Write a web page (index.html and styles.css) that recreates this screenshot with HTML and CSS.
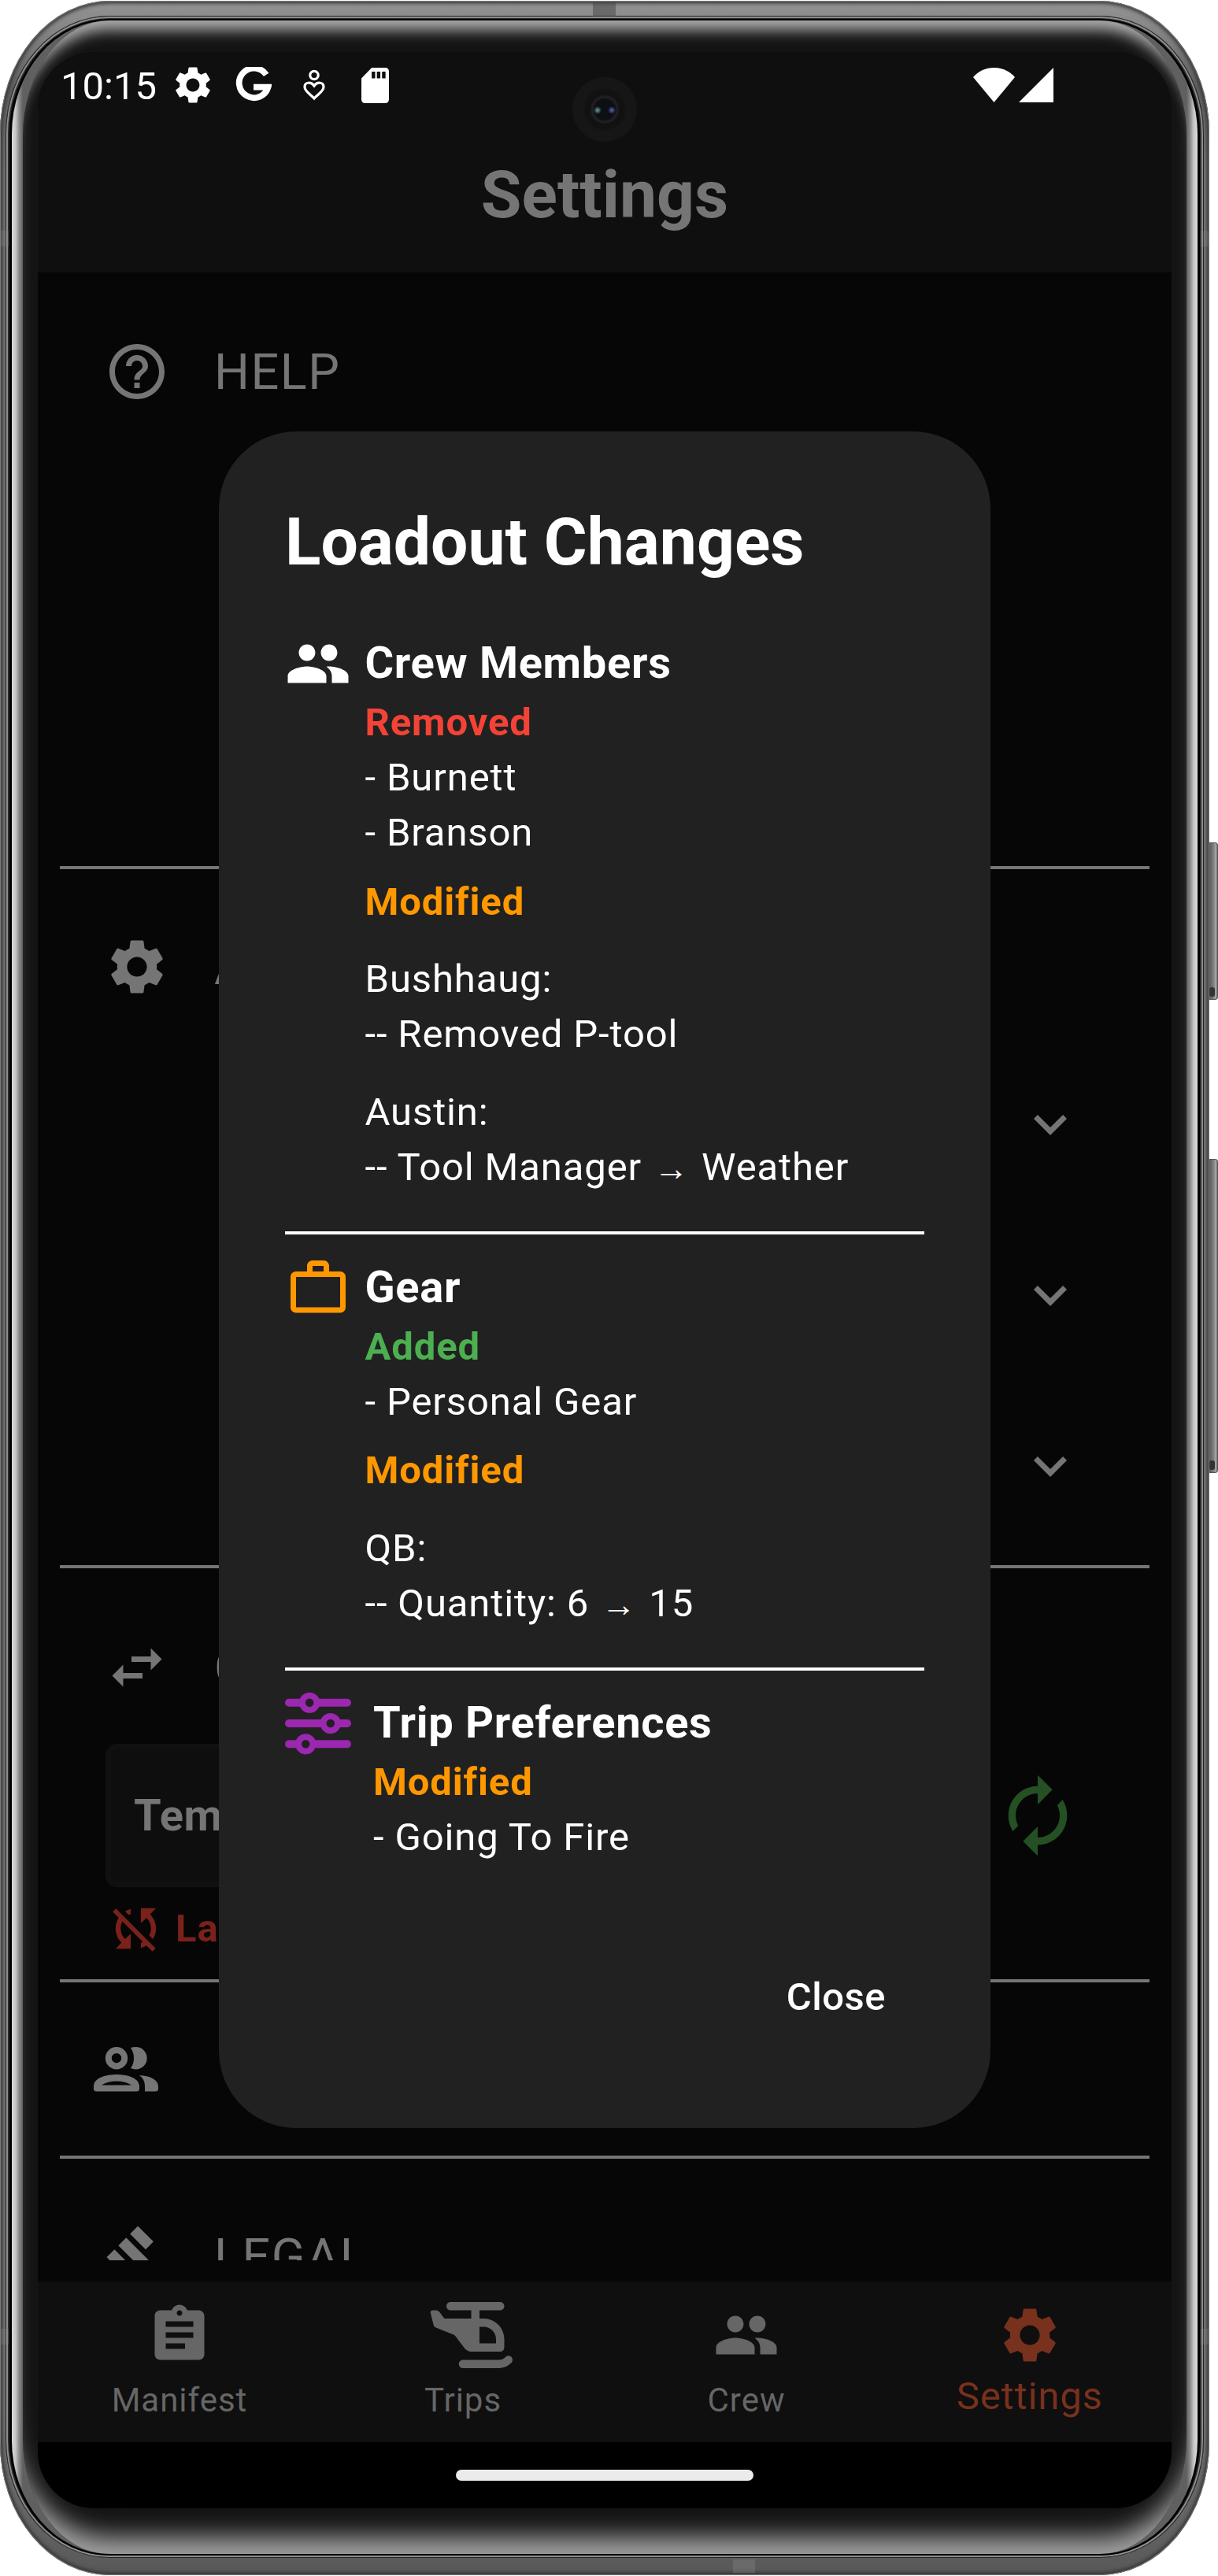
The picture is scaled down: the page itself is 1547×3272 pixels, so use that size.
FILE: index.html
```html
<!DOCTYPE html>
<html lang="en">
<head>
<meta charset="utf-8">
<title>Settings</title>
<link rel="stylesheet" href="styles.css">
</head>
<body>
<svg width="0" height="0" class="defs">
  <symbol id="gear" viewBox="0 0 24 24"><path fill-rule="evenodd" d="M19.14 12.94c.04-.3.06-.61.06-.94 0-.32-.02-.64-.07-.94l2.03-1.58c.18-.14.23-.41.12-.61l-1.92-3.32c-.12-.22-.37-.29-.59-.22l-2.39.96c-.5-.38-1.03-.7-1.62-.94l-.36-2.54c-.04-.24-.24-.41-.48-.41h-3.84c-.24 0-.43.17-.47.41l-.36 2.54c-.59.24-1.13.57-1.62.94l-2.39-.96c-.22-.08-.47 0-.59.22L2.74 8.87c-.12.21-.08.47.12.61l2.03 1.58c-.05.3-.09.63-.09.94s.02.64.07.94l-2.03 1.58c-.18.14-.23.41-.12.61l1.92 3.32c.12.22.37.29.59.22l2.39-.96c.5.38 1.03.7 1.62.94l.36 2.54c.05.24.24.41.48.41h3.84c.24 0 .44-.17.47-.41l.36-2.54c.59-.24 1.13-.56 1.62-.94l2.39.96c.22.08.47 0 .59-.22l1.92-3.32c.12-.22.07-.47-.12-.61l-2.01-1.58zM12 15.6c-1.98 0-3.6-1.62-3.6-3.6s1.62-3.6 3.6-3.6 3.6 1.62 3.6 3.6-1.62 3.6-3.6 3.6z"/></symbol>
  <symbol id="people" viewBox="0 0 24 24"><path d="M16 11c1.66 0 2.99-1.34 2.99-3S17.66 5 16 5c-1.66 0-3 1.34-3 3s1.34 3 3 3zm-8 0c1.66 0 2.99-1.34 2.99-3S9.66 5 8 5C6.34 5 5 6.34 5 8s1.34 3 3 3zm0 2c-2.33 0-7 1.17-7 3.5V19h14v-2.5c0-2.33-4.67-3.5-7-3.5zm8 0c-.29 0-.62.02-.97.05 1.16.84 1.97 1.97 1.97 3.45V19h6v-2.5c0-2.33-4.67-3.5-7-3.5z"/></symbol>
  <symbol id="chevron" viewBox="0 0 24 24"><path d="M16.59 8.59L12 13.17 7.41 8.59 6 10l6 6 6-6z"/></symbol>
</svg>

<div class="device">
  <span class="key power"></span>
  <span class="key volume"></span>
  <div class="body">
    <span class="band top"></span><span class="band bottom"></span>
    <span class="band side left upper"></span><span class="band side left lower"></span>
    <span class="band side right upper"></span><span class="band side right lower"></span>
    <div class="groove"><div class="seam"><div class="glass"><div class="bezel">
      <main class="screen">
        <header class="appbar">
          <div class="status">
            <span class="clock">10:15</span>
            <svg class="s-gear"><use href="#gear"/></svg>
            <svg class="s-google" viewBox="0 0 44 44"><path d="M37.5 9.5A18 18 0 1 0 39.8 24.5H22" fill="none" stroke="#fff" stroke-width="7.4"/></svg>
            <svg class="s-heart" viewBox="0 0 28 40" fill="none" stroke="#fff" stroke-width="3.2"><circle cx="14" cy="7.500" r="5.2"/><path d="M14 37C9 31.500 2 28 2 22.500C2 16 10 15.500 14 21C18 15.500 26 16 26 22.500C26 28 19 31.500 14 37z"/></svg>
            <svg class="s-sd" viewBox="4 2 16 20" preserveAspectRatio="none"><path d="M18 2h-8L4.020 8 4 20c0 1.100.9 2 2 2h12c1.100 0 2-.9 2-2V4c0-1.100-.9-2-2-2zm-6 6h-2V4.200h2V8zm3 0h-2V4.200h2V8zm3 0h-2V4.200h2V8z"/></svg>
            <svg class="s-wifi" viewBox="0 0 53 44"><path d="M26.500 44L0 12C7 4 16 0 26.500 0S46 4 53 12z"/></svg>
            <svg class="s-cell" viewBox="0 0 44 44"><path d="M44 0V44H0z"/></svg>
          </div>
          <h1>Settings</h1>
          <span class="camera"></span>
        </header>

        <div class="list">
          <section class="help">
            <div class="row"><svg class="icon" viewBox="0 0 24 24"><path d="M11 18h2v-2h-2v2zm1-16C6.480 2 2 6.480 2 12s4.480 10 10 10 10-4.480 10-10S17.520 2 12 2zm0 18c-4.410 0-8-3.590-8-8s3.590-8 8-8 8 3.590 8 8-3.590 8-8 8zm0-14c-2.210 0-4 1.790-4 4h2c0-1.100.9-2 2-2s2 .9 2 2c0 2-3 1.750-3 5h2c0-2.250 3-2.500 3-5 0-2.210-1.790-4-4-4z"/></svg><span>HELP</span></div>
          </section>
          <section class="app">
            <div class="row"><svg class="icon"><use href="#gear"/></svg><span>APP</span></div>
            <div class="options">
              <div class="option"><svg class="icon"><use href="#chevron"/></svg></div>
              <div class="option"><svg class="icon"><use href="#chevron"/></svg></div>
              <div class="option"><svg class="icon"><use href="#chevron"/></svg></div>
            </div>
          </section>
          <section class="share">
            <div class="row"><svg class="icon" viewBox="0 0 24 24"><path d="M6.990 11L3 15l3.990 4v-3H14v-2H6.990v-3zM21 9l-3.990-4v3H10v2h7.010v3L21 9z"/></svg><span>C</span></div>
            <div class="template">
              <div class="field">Tem</div>
              <svg class="renew" viewBox="0 0 24 24"><path d="M12 6v3l4-4-4-4v3c-4.420 0-8 3.580-8 8 0 1.570.46 3.030 1.240 4.260L6.700 14.800c-.45-.83-.7-1.790-.7-2.800 0-3.310 2.690-6 6-6zm6.760 1.740L17.300 9.200c.44.84.7 1.790.7 2.800 0 3.310-2.690 6-6 6v-3l-4 4 4 4v-3c4.420 0 8-3.580 8-8 0-1.570-.46-3.030-1.240-4.260z"/></svg>
            </div>
            <div class="sync"><svg viewBox="0 0 24 24"><path d="M10 6.350V4.260c-.8.210-1.550.54-2.230.96l1.460 1.460c.25-.12.5-.24.77-.33zm-7.140-.94l2.360 2.360C4.450 8.990 4 10.440 4 12c0 2.210.91 4.200 2.360 5.640L4 20h6v-6l-2.240 2.240C6.680 15.150 6 13.660 6 12c0-1 .25-1.940.68-2.770l8.080 8.080c-.25.13-.5.25-.77.34v2.090c.8-.21 1.550-.54 2.230-.96l2.360 2.360 1.270-1.270L4.140 4.140 2.860 5.410zM20 4h-6v6l2.240-2.240C17.320 8.850 18 10.340 18 12c0 1-.25 1.940-.68 2.770l1.460 1.460C19.550 15.010 20 13.560 20 12c0-2.210-.91-4.200-2.360-5.640L20 4z"/></svg>La</div>
          </section>
          <section class="crew">
            <svg class="group" viewBox="0 0 82 57"><circle cx="29" cy="14.200" r="10.200" fill="none" stroke="#757575" stroke-width="8"/><path d="M47 1Q50 0 53.500 0A14.200 14.200 0 0 1 53.500 28.400Q50 28.400 47 27Q51 21.500 51 14.200Q51 7 47 1z"/><path fill-rule="evenodd" d="M0 50C0 39 16 35 29 35S58 39 58 50v3q0 3.500-3.500 3.500h-51Q0 56.500 0 53zM10 48.500h38Q40 43.500 29 43.500T10 48.500z"/><path d="M58 36C72 36.500 82 42 82 50v3q0 3.500-3.500 3.500H65V50Q65 41 58 36z"/></svg>
          </section>
          <section class="legal">
            <div class="row"><svg class="icon" viewBox="0 0 24 24"><path d="M1 21h12v2H1zM5.245 8.070l2.830-2.827 14.140 14.142-2.828 2.828zM12.317 1l5.657 5.656-2.830 2.830-5.654-5.660zM3.825 9.485l5.657 5.657-2.828 2.828-5.657-5.657z"/></svg><span>LEGAL</span></div>
          </section>
        </div>

        <nav class="tabs">
          <div class="tab"><svg class="icon" viewBox="0 0 24 24"><path d="M19 3h-4.180C14.400 1.840 13.300 1 12 1c-1.300 0-2.400.84-2.820 2H5c-1.100 0-2 .9-2 2v14c0 1.100.9 2 2 2h14c1.100 0 2-.9 2-2V5c0-1.100-.9-2-2-2zm-7 0c.55 0 1 .45 1 1s-.45 1-1 1-1-.45-1-1 .45-1 1-1zm2 14H7v-2h7v2zm3-4H7v-2h10v2zm0-4H7V7h10v2z"/></svg><span>Manifest</span></div>
          <div class="tab trips"><svg class="heli" viewBox="0 0 640 512"><path fill-rule="evenodd" d="M128 32c0-17.700 14.300-32 32-32H544c17.700 0 32 14.300 32 32s-14.300 32-32 32H384v64h32c88.400 0 160 71.600 160 160v64c0 17.700-14.300 32-32 32H384 320c-20.100 0-39.100-9.500-51.200-25.600l-71.400-95.200c-3.500-4.700-8.300-8.300-13.700-10.500L47.200 198.100c-9.500-3.800-16.700-12-19.200-22L5 83.900C2.400 73.800 10.100 64 20.500 64H48c10.100 0 19.600 4.700 25.600 12.800L112 128H320V64H160c-17.700 0-32-14.300-32-32zM384 320H512V288c0-53-43-96-96-96H384V320zM630.600 425.400c12.500 12.500 12.500 32.800 0 45.300l-3.900 3.900c-24 24-56.600 37.500-90.500 37.500H256c-17.700 0-32-14.300-32-32s14.300-32 32-32H536.200c17 0 33.300-6.700 45.300-18.700l3.900-3.900c12.500-12.500 32.800-12.500 45.300 0z"/></svg><span>Trips</span></div>
          <div class="tab"><svg class="icon"><use href="#people"/></svg><span>Crew</span></div>
          <div class="tab active"><svg class="icon"><use href="#gear"/></svg><span>Settings</span></div>
        </nav>
        <div class="gesture"><span></span></div>

        <div class="dialog">
          <h2>Loadout Changes</h2>
          <section class="group-changes">
            <svg class="icon white"><use href="#people"/></svg>
            <div>
              <h3>Crew Members</h3>
              <p class="removed">Removed</p>
              <p>- Burnett</p>
              <p>- Branson</p>
              <p class="modified gap">Modified</p>
              <p class="item">Bushhaug:</p>
              <p>-- Removed P-tool</p>
              <p class="item">Austin:</p>
              <p>-- Tool Manager <span class="arrow">→</span> Weather</p>
            </div>
          </section>
          <section class="group-changes">
            <svg class="icon orange" viewBox="0 0 24 24"><path fill-rule="evenodd" d="M14 6V4h-4v2h4zM4 8v11h16V8H4zm16-2c1.110 0 2 .89 2 2v11c0 1.110-.89 2-2 2H4c-1.110 0-2-.89-2-2l.010-11c0-1.110.88-2 1.990-2h4V4c0-1.110.89-2 2-2h4c1.110 0 2 .89 2 2v2h4z"/></svg>
            <div>
              <h3>Gear</h3>
              <p class="added">Added</p>
              <p>- Personal Gear</p>
              <p class="modified gap">Modified</p>
              <p class="item">QB:</p>
              <p>-- Quantity: 6 <span class="arrow">→</span> 15</p>
            </div>
          </section>
          <section class="group-changes prefs">
            <svg class="icon" viewBox="0 0 512 512" fill="#212121" stroke="#9c27b0" stroke-width="60" stroke-linecap="round"><path d="M30 96H482M30 256H482M30 416H482"/><g stroke-width="48"><circle cx="190" cy="96" r="56"/><circle cx="352" cy="256" r="56"/><circle cx="160" cy="416" r="56"/></g></svg>
            <div>
              <h3>Trip Preferences</h3>
              <p class="modified">Modified</p>
              <p>- Going To Fire</p>
            </div>
          </section>
          <button class="close">Close</button>
        </div>
      </main>
    </div></div></div></div>
  </div>
</div>
</body>
</html>
```
FILE: styles.css
```css
* { box-sizing: border-box; margin: 0; padding: 0; }
body { background: #fff; font-family: Roboto, sans-serif; }
.defs { position: absolute; }
svg { display: block; flex: none; }
.icon { width: 84px; height: 84px; }

/* handset */
.device { position: relative; width: 1547px; height: 3272px; overflow: hidden; }
.key { position: absolute; left: 1533px; width: 14px; border-radius: 0 4px 4px 0; border: 1px solid #555; border-left: 0;
  background: linear-gradient(to right, #333 0, #606060 4px, #858585 9px, #aaa 11px, #555 14px); }
.key::after { content: ""; position: absolute; left: 3px; right: 3px; bottom: 3px; height: 12px; background: #333; border-radius: 3px; }
.power { top: 1070px; height: 200px; }
.volume { top: 1472px; height: 399px; }
.body { position: absolute; top: 1px; left: 0; width: 1536px; height: 3270px; padding: 19px 7px 22px; border-radius: 140px / 168px;
  background: linear-gradient(#949494 0, #888 30px, #606060 110px, #787878 220px, #787878 3060px, #686868 3170px, #585858 3270px);
  box-shadow: inset 0 0 0 1px #7c7c7c, inset 0 0 5px 3px #303030; }
.groove { height: 100%; padding: 4px 5px 3px; border-radius: 132px / 150px; background: #1c1c1c;
  box-shadow: inset 0 0 0 1px #222, inset 0 0 0 3px #8e8e8e, inset 0 0 0 5px #2a2a2a; }
.seam { height: 100%; padding: 2px 3px; border-radius: 127px / 146px; background: #000; }
.glass { height: 100%; padding: 0 14px; border-radius: 124px / 144px;
  background: linear-gradient(to right, #dcdcdc 0, #c4c4c4 5px, #8d8d8d 9px, #606060 14px, #606060 1492px, #8d8d8d 1497px, #c4c4c4 1501px, #dcdcdc 1506px); }
.bezel { height: 100%; padding: 40px 19px 58px; border-radius: 110px / 146px; background: #141414;
  box-shadow: inset 0 28px 18px -16px #b0b0b0, inset 0 -40px 30px -18px #a0a0a0; }
.band { position: absolute; background: rgba(60, 60, 60, .45); }
.band.top { left: 753px; top: 2px; width: 29px; height: 18px; }
.band.bottom { left: 931px; bottom: 3px; width: 28px; height: 17px; background: rgba(170, 170, 170, .2); }
.band.side { width: 10px; height: 20px; background: rgba(140, 140, 140, .25); }
.band.left { left: 1px; } .band.right { right: 1px; }
.band.upper { top: 292px; } .band.lower { top: 2957px; }

/* screen */
.screen { position: relative; display: flex; flex-direction: column; width: 1440px; height: 3120px; border-radius: 72px; overflow: hidden; background: #060606; color: #757575; fill: #757575; }
.appbar { position: relative; height: 280px; background: #0f0f0f; }
.status { display: flex; align-items: center; height: 84px; padding-left: 29px; fill: #fff; color: #fff; }
.clock { width: 141px; font-size: 49px; line-height: 58px; margin-top: 4px; }
.s-gear { width: 56px; height: 56px; margin-left: -1px; }
.s-google { width: 46px; height: 46px; margin-left: 26px; }
.s-heart { width: 28px; height: 40px; margin-left: 40px; }
.s-sd { width: 35px; height: 45px; margin-left: 46px; }
.s-wifi { width: 53px; height: 44px; margin-left: 742px; }
.s-cell { width: 44px; height: 44px; margin-left: 5px; }
h1 { padding-top: 42px; text-align: center; font-size: 84px; line-height: 112px; font-weight: 700; }
.camera { position: absolute; left: 679px; top: 32px; width: 82px; height: 82px; border-radius: 50%;
  background: radial-gradient(circle 5px at 32px 42px, #6fa0a0, transparent), radial-gradient(circle 5px at 50px 42px, #5468b8, transparent), radial-gradient(circle at 50% 50%, #0c0f14 0 11px, #101010 13px, #222 16px, #111 19px, #121212 25px, #161616 28px 41px); }

.list { height: 2525px; margin-bottom: 27px; overflow: hidden; }
.list > section { margin: 0 28px; border-bottom: 4px solid #757575; }
.row { display: flex; align-items: center; gap: 56px; height: 84px; padding-left: 56px; font-size: 63px; line-height: 84px; letter-spacing: 1.5px; }
.row span { padding-top: 2px; }
.help { height: 758px; padding-top: 84px; }
.app { height: 888px; padding-top: 82px; }
.options { margin-top: 49px; }
.option { display: flex; justify-content: flex-end; align-items: center; height: 217px; padding-right: 84px; }
.share { height: 526px; padding-top: 84px; }
.template { display: flex; align-items: center; margin: 55px 0 0 58px; height: 182px; }
.field { width: 1100px; height: 182px; padding-left: 35px; border: 1px solid #121212; border-radius: 14px; background: #0e0e0e; font-size: 56px; font-weight: 700; line-height: 180px; letter-spacing: .5px; box-shadow: inset 0 0 0 6px #101010; }
.renew { width: 112px; height: 112px; margin-left: 28px; fill: #245024; }
.sync { display: flex; align-items: center; gap: 12px; height: 77px; margin: 14px 0 0 58px; font-size: 49px; font-weight: 700; line-height: 77px; letter-spacing: .9px; color: #7a211b; fill: #7a211b; }
.sync svg { width: 77px; height: 77px; }
.crew { height: 224px; padding: 82px 0 0 43px; }
.group { width: 82px; height: 57px; }
.list > .legal { height: 300px; padding-top: 82px; border: 0; }

.tabs { display: flex; height: 204px; background: #0f0f0f; color: #666; fill: #666; }
.tab { flex: 1; display: flex; flex-direction: column; align-items: center; padding-top: 26px; font-size: 42px; line-height: 60px; letter-spacing: 1px; }
.tab span { margin-top: 11px; }
.heli { width: 105px; height: 84px; margin-left: 21px; }
.tab.active { color: #78311d; fill: #78311d; font-size: 49px; letter-spacing: .9px; }
.tab.active span { margin-top: 6px; }
.gesture { flex: 1; display: flex; justify-content: center; background: #000; }
.gesture span { width: 378px; height: 14px; margin-top: 35px; border-radius: 7px; background: #ebebeb; }

/* change summary */
.dialog { position: absolute; left: 230px; top: 482px; width: 980px; height: 2155px; padding: 85px 84px 0; border-radius: 98px; background: #212121; color: #fff; display: flex; flex-direction: column; }
h2 { font-size: 84px; line-height: 112px; font-weight: 700; margin-bottom: 56px; white-space: nowrap; }
.group-changes { display: flex; gap: 17.5px; padding-bottom: 46px; margin-bottom: 26px; border-bottom: 4px solid #fff; }
.prefs { gap: 28px; border: 0; margin: -1px 0 0; padding: 0; }
.white { fill: #fff; }
.orange { fill: #ff9800; }
h3 { font-size: 56px; line-height: 82px; font-weight: 700; letter-spacing: .7px; white-space: nowrap; }
p { font-size: 49px; line-height: 70px; letter-spacing: .875px; white-space: nowrap; }
.removed, .modified, .added { font-weight: 700; }
.removed { color: #f44336; }
.modified { color: #ff9800; }
.added { color: #4caf50; }
.gap { margin-top: 17.5px; }
.item { margin-top: 28.5px; }
.arrow { display: inline-block; width: 50px; text-align: center; font: 44px/40px "Liberation Sans", sans-serif; vertical-align: 0; }
.close { align-self: flex-end; margin: 133px 49px 0 0; border: 0; background: none; color: #fff; font: 500 49px/70px Roboto, sans-serif; letter-spacing: .5px; }
```
